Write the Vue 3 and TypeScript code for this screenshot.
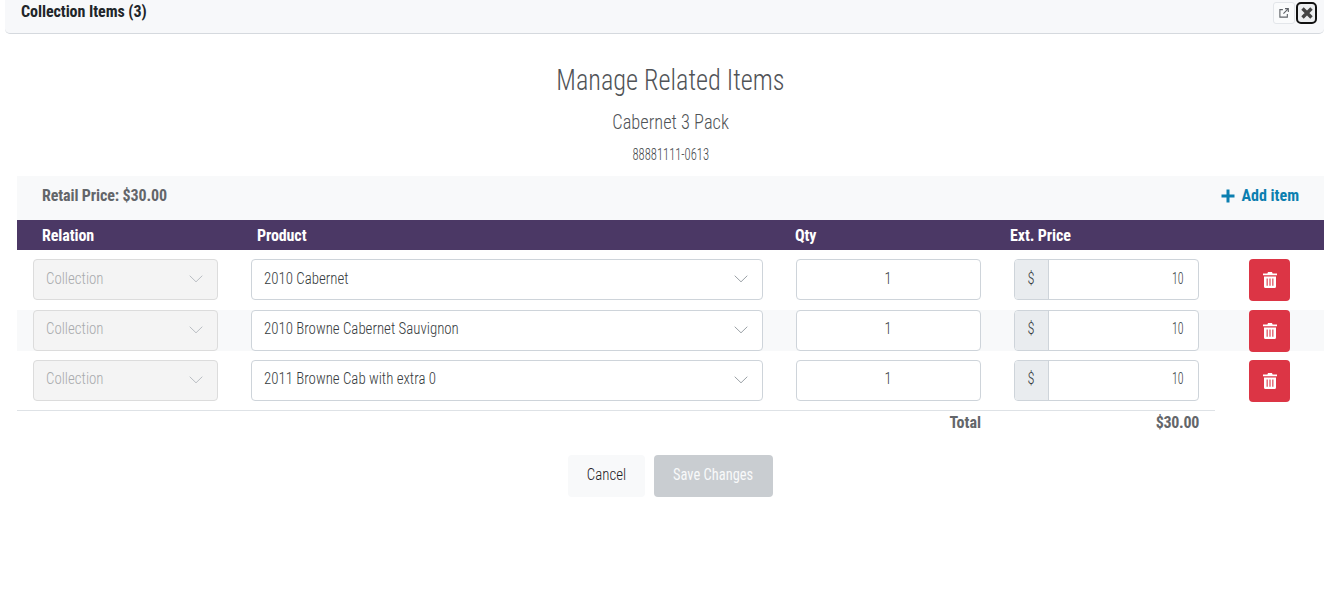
<script setup lang="ts">
interface Item { product: string; qty: number; price: number }
const items: Item[] = [
  { product: '2010 Cabernet', qty: 1, price: 10 },
  { product: '2010 Browne Cabernet Sauvignon', qty: 1, price: 10 },
  { product: '2011 Browne Cab with extra 0', qty: 1, price: 10 },
]
</script>

<template>
  <div class="page">
    <header class="topbar">
      <span class="topbar-title">Collection Items (3)</span>
      <div class="topbar-actions">
        <button class="win-btn" type="button" aria-label="Open in new window">
          <svg width="10" height="10" viewBox="0 0 9 9" fill="none" stroke="#5f6368" stroke-width="1">
            <path d="M3.5 1.5H.8v6.7h6.700V5.500" />
            <path d="M4 5 8.200.800M5.400.600h3v3" />
          </svg>
        </button>
        <button class="win-btn win-close" type="button" aria-label="Close">
          <svg width="12" height="12" viewBox="0 0 12 12" fill="none" stroke="#444" stroke-width="3.4">
            <path d="M1.500 1.500l9 9M10.500 1.500l-9 9" />
          </svg>
        </button>
      </div>
    </header>

    <main class="content">
      <div class="heading">
        <h1><span class="narrow">Manage Related Items</span></h1>
        <h2><span class="narrow">Cabernet 3 Pack</span></h2>
        <p><span class="narrow sku">88881111-0613</span></p>
      </div>

      <div class="price-bar">
        <span class="retail">Retail Price: $30.00</span>
        <a class="add-item">
          <svg width="14" height="14" viewBox="0 0 14 14" fill="none" stroke="#0b7fb0" stroke-width="3">
            <path d="M7 .5v13M.5 7h13" />
          </svg>
          Add item
        </a>
      </div>

      <div class="table-head">
        <span>Relation</span>
        <span>Product</span>
        <span>Qty</span>
        <span>Ext. Price</span>
      </div>

      <div class="rows">
        <div v-for="(item, i) in items" :key="i" class="row" :class="{ striped: i === 1 }">
          <div class="select disabled">
            <span class="cell-text">Collection</span>
            <svg class="chev" width="14" height="8" viewBox="0 0 14 8" fill="none" stroke="#b9bdc2" stroke-width="1"><path d="M.7.7 7 6.800 13.300.700" /></svg>
          </div>
          <div class="select">
            <span class="cell-text">{{ item.product }}</span>
            <svg class="chev" width="14" height="8" viewBox="0 0 14 8" fill="none" stroke="#9aa0a6" stroke-width="1"><path d="M.7.7 7 6.800 13.300.700" /></svg>
          </div>
          <div class="qty"><span class="num">{{ item.qty }}</span></div>
          <div class="money">
            <span class="prefix"><span class="num">$</span></span>
            <span class="amount"><span class="num num-right">{{ item.price }}</span></span>
          </div>
          <button class="delete" type="button" aria-label="Delete">
            <svg width="14" height="16" viewBox="0 0 14 16" fill="#fff">
              <path d="M5 0h4l.6 1.400H14v1.800H0V1.400h4.400L5 0z" />
              <path fill-rule="evenodd" d="M1 4.400h12V14.500a1.500 1.500 0 0 1-1.500 1.500h-9A1.500 1.500 0 0 1 1 14.500V4.400zM3.600 6.400v7.400h1.100V6.400H3.600zM6.450 6.400v7.400h1.100V6.400H6.450zM9.300 6.400v7.400h1.100V6.400H9.300z" />
            </svg>
          </button>
        </div>
      </div>

      <div class="totals">
        <span class="total-label">Total</span>
        <span class="total-value">$30.00</span>
      </div>

      <div class="actions">
        <button class="cancel" type="button"><span class="narrow">Cancel</span></button>
        <button class="save" type="button" disabled><span class="narrow">Save Changes</span></button>
      </div>
    </main>
  </div>
</template>

<style>
html, body { margin: 0; background: #fff; }
</style>

<style scoped>
.page {
  width: 1324px;
  height: 593px;
  overflow: hidden;
  font-family: Roboto, "Liberation Sans", sans-serif;
  font-stretch: 75%;
  color: #63666a;
  background: #fff;
}
.narrow { display: inline-block; transform: scaleX(0.875); white-space: nowrap; }
.sku { transform: scaleX(0.785); }
.topbar {
  box-sizing: border-box;
  height: 34px;
  margin-left: 5px;
  padding: 0 7px 11px 16px;
  background: #f7f8fa;
  border-bottom: 1px solid #d5d9de;
  border-radius: 0 0 5px 5px;
  display: flex;
  align-items: center;
  justify-content: space-between;
}
.topbar-title { font-size: 16px; font-weight: 700; color: #212529; letter-spacing: -0.06px; }
.topbar-actions { display: flex; gap: 1px; margin-top: 3px; }
.win-btn {
  box-sizing: border-box;
  width: 22px;
  height: 22px;
  padding: 0;
  display: flex;
  align-items: center;
  justify-content: center;
  background: #fafbfc;
  border: 1px solid #e3e6ea;
  border-radius: 3px;
}
.win-close { width: 21px; border: 2px solid #111; border-radius: 5px; background: #eceef0; }
.content { padding-left: 17px; }
.heading { text-align: center; height: 142px; }
.heading h1 { margin: 0; padding-top: 28px; font-size: 30px; line-height: 36px; font-weight: 300; color: #505357; }
.heading h2 { margin: 0; padding-top: 12px; font-size: 21px; line-height: 25px; font-weight: 300; color: #505357; }
.heading p { margin: 0; padding-top: 10px; font-size: 16px; line-height: 20px; font-weight: 300; color: #44474b; }
.price-bar {
  box-sizing: border-box;
  height: 44px;
  padding: 0 25px 5px;
  background: #f8f9fa;
  display: flex;
  align-items: center;
  justify-content: space-between;
}
.retail { font-size: 16px; font-weight: 700; color: #63666a; letter-spacing: -0.12px; }
.add-item { display: flex; align-items: center; gap: 6px; font-size: 16px; font-weight: 700; color: #0b7fb0; }
.table-head {
  height: 30px;
  padding-left: 25px;
  background: #4b3865;
  color: #fff;
  font-size: 16px;
  font-weight: 700;
  letter-spacing: -0.1px;
  display: grid;
  grid-template-columns: 215px 538px 215px 1fr;
  align-items: center;
}
.rows { padding-top: 9.3px; }
.row {
  height: 41px;
  padding: 0 0 0 16px;
  margin-bottom: 9.3px;
  display: grid;
  grid-template-columns: 185px 512px 185px 185px 41px;
  column-gap: 33px;
  align-items: start;
}
.row.striped { background: #f8f9fa; }
.select {
  box-sizing: border-box;
  height: 41px;
  padding: 0 13px 3.8px 12px;
  background: #fff;
  border: 1px solid #ced4da;
  border-radius: 4px;
  font-size: 17px;
  font-weight: 300;
  color: #363b40;
  display: flex;
  align-items: center;
  justify-content: space-between;
}
.cell-text { display: inline-block; transform: scaleX(0.875); transform-origin: left center; white-space: nowrap; }
.select.disabled { background: #f4f4f4; border-color: #dcdcdc; color: #a8aaad; }
.chev { margin-right: 1px; margin-top: 3px; }
.qty {
  box-sizing: border-box;
  height: 41px;
  padding-bottom: 3.8px;
  background: #fff;
  border: 1px solid #ced4da;
  border-radius: 4px;
  font-size: 17px;
  font-weight: 300;
  color: #363b40;
  display: flex;
  align-items: center;
  justify-content: center;
}
.num { display: inline-block; transform: scaleX(0.85); }
.num-right { transform-origin: right center; transform: scaleX(0.7); }
.money {
  box-sizing: border-box;
  height: 41px;
  display: flex;
  font-size: 17px;
  font-weight: 300;
  color: #363b40;
  background: #fff;
  border: 1px solid #ced4da;
  border-radius: 4px;
  overflow: hidden;
}
.prefix {
  width: 34px;
  flex: none;
  padding-bottom: 3.8px;
  box-sizing: border-box;
  background: #e9ecef;
  border-right: 1px solid #ced4da;
  display: flex;
  align-items: center;
  justify-content: center;
}
.amount { flex: 1; display: flex; align-items: center; justify-content: flex-end; padding: 0 14px 3.8px 0; }
.delete {
  width: 41px;
  height: 42px;
  margin-left: 17px;
  padding: 0;
  background: #dc3545;
  border: 0;
  border-radius: 4px;
  display: flex;
  align-items: center;
  justify-content: center;
}
.totals {
  box-sizing: border-box;
  width: 1198px;
  height: 24px;
  border-top: 1px solid #dee2e6;
  display: grid;
  grid-template-columns: 964px 218px;
  align-items: center;
  font-size: 16px;
  font-weight: 700;
  color: #63666a;
}
.total-label, .total-value { text-align: right; }
.total-value { letter-spacing: -0.3px; }
.actions { display: flex; justify-content: center; gap: 9px; margin-top: 21px; padding-right: 17px; margin-left: 16px; }
.actions button {
  height: 42px;
  padding: 0 0 5px;
  border: 0;
  border-radius: 4px;
  font-family: inherit;
  font-stretch: 75%;
  font-size: 17px;
  font-weight: 300;
}
.cancel { width: 77px; background: #f8f9fa; color: #1d2125; }
.save { width: 119px; background: #c9cdd1; color: #f8f9fa; font-weight: 400 !important; }
.save .narrow { transform: scaleX(0.85); }
</style>
